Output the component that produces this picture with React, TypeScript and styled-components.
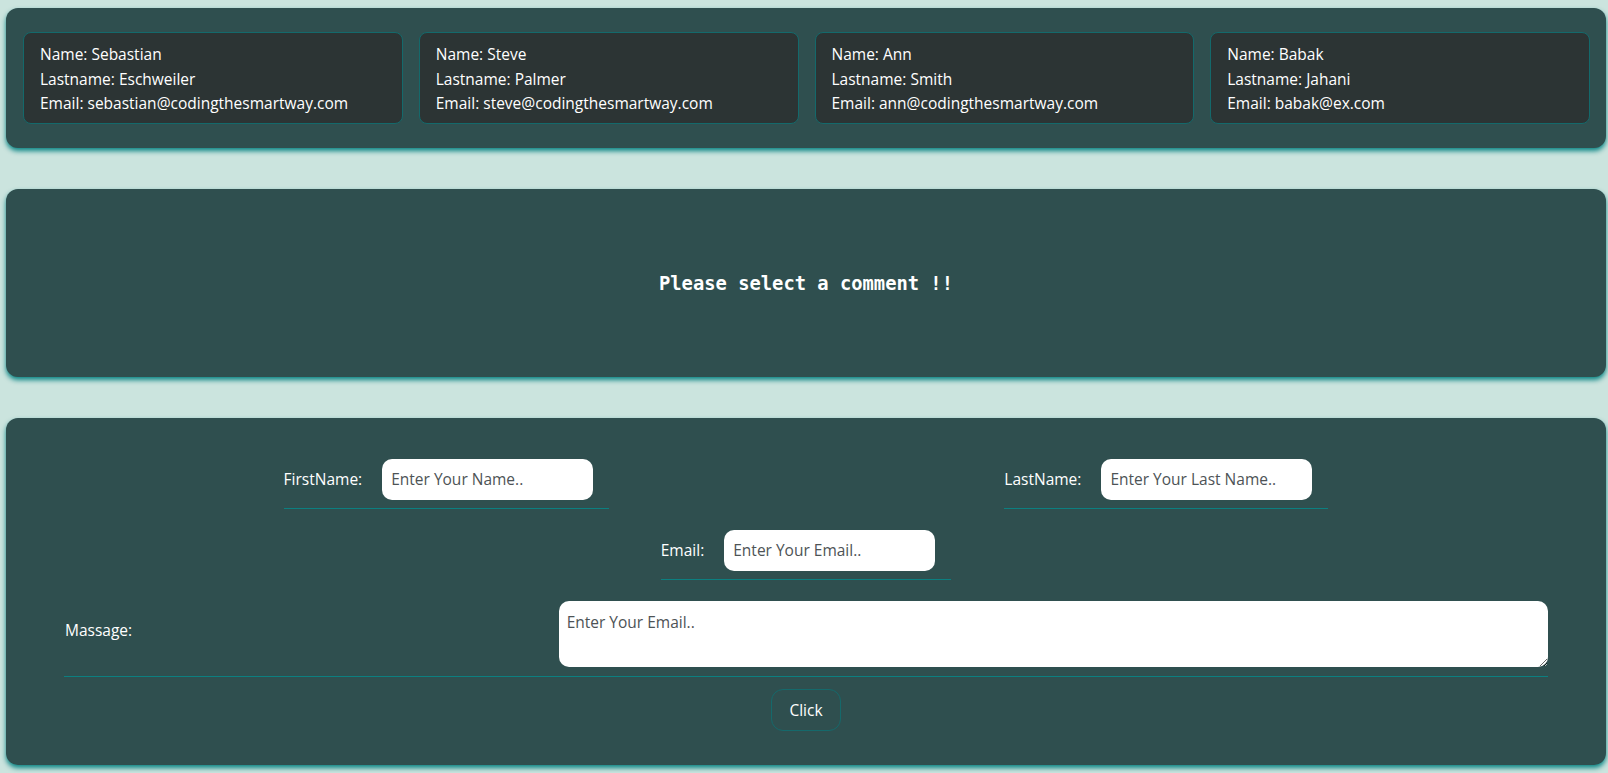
import React from "react";
import styled, { createGlobalStyle } from "styled-components";

const GlobalStyle = createGlobalStyle`
  html, body {
    margin: 0;
    padding: 0;
    background: #cbe4de;
  }
  body {
    font-family: "Open Sans", "Noto Sans", sans-serif;
    font-size: 15.5px;
    color: #ffffff;
  }
  * { box-sizing: border-box; }
`;

const Page = styled.div`
  display: flex;
  flex-direction: column;
  gap: 41px;
  padding: 8px 2px 8px 6px;
`;

const Panel = styled.section<{ $height?: number }>`
  width: 1600px;
  background: #2f4f4f;
  border-radius: 12px;
  box-shadow: 0 3px 5px rgba(0, 128, 128, 0.95);
  ${(p) => (p.$height ? `height: ${p.$height}px;` : "")}
`;

const CardPanel = styled(Panel)`
  display: grid;
  grid-template-columns: repeat(4, 1fr);
  gap: 16px;
  padding: 24px 16px 24px 17px;
`;

const Card = styled.div`
  background: #2c3434;
  border: 1px solid #14696b;
  border-radius: 8px;
  padding: 9px 16px 7px;
  line-height: 24.5px;
  cursor: pointer;
`;

const Line = styled.div`
  white-space: nowrap;
`;

const MessagePanel = styled(Panel)`
  display: flex;
  align-items: center;
  justify-content: center;
  padding-top: 2px;
`;

const Notice = styled.h3`
  margin: 0;
  font-family: "DejaVu Sans Mono", "Liberation Mono", monospace;
  font-weight: bold;
  font-size: 18.8px;
  color: #ffffff;
`;

const FormPanel = styled(Panel)`
  display: flex;
  flex-direction: column;
  align-items: center;
  padding: 41px 0 34px;
`;

const PairRow = styled.div`
  width: 1440px;
  display: flex;
  justify-content: space-around;
`;

const Field = styled.label`
  display: inline-flex;
  align-items: center;
  gap: 20px;
  padding: 0 16px 8px 0;
  border-bottom: 1px solid #0c7f80;
`;

const FieldText = styled.span`
  white-space: nowrap;
`;

const Input = styled.input`
  width: 211px;
  height: 41px;
  border: none;
  outline: none;
  border-radius: 10px;
  background: #ffffff;
  padding: 0 9px;
  font-family: "Open Sans", "Noto Sans", sans-serif;
  font-size: 15.5px;
  color: #222;
  &::placeholder {
    color: #4d5356;
  }
`;

const EmailRow = styled.div`
  margin-top: 21px;
  display: flex;
  justify-content: center;
`;

const MassageRow = styled.label`
  margin-top: 21px;
  width: 1484px;
  display: grid;
  grid-template-columns: 1fr 2fr;
  align-items: center;
  padding-bottom: 9px;
  border-bottom: 1px solid #0c7f80;
`;

const MassageText = styled.span`
  padding-left: 1px;
  margin-top: -8px;
`;

const TextArea = styled.textarea`
  display: block;
  width: 100%;
  height: 66px;
  border: none;
  outline: none;
  border-radius: 10px;
  background: #ffffff;
  padding: 9px 8px;
  font-family: "Open Sans", "Noto Sans", sans-serif;
  font-size: 15.5px;
  line-height: 24px;
  resize: vertical;
  &::placeholder {
    color: #4d5356;
  }
`;

const SubmitButton = styled.button`
  margin-top: 12px;
  width: 70px;
  height: 42px;
  background: transparent;
  border: 1px solid #15696b;
  border-radius: 12px;
  color: #ffffff;
  font-family: "Open Sans", "Noto Sans", sans-serif;
  font-size: 15.5px;
  cursor: pointer;
`;

const people = [
  { name: "Sebastian", last: "Eschweiler", email: "sebastian@codingthesmartway.com" },
  { name: "Steve", last: "Palmer", email: "steve@codingthesmartway.com" },
  { name: "Ann", last: "Smith", email: "ann@codingthesmartway.com" },
  { name: "Babak", last: "Jahani", email: "babak@ex.com" },
];

export default function App() {
  return (
    <>
      <GlobalStyle />
      <Page>
        <CardPanel>
          {people.map((p) => (
            <Card key={p.email}>
              <Line>Name: {p.name}</Line>
              <Line>Lastname: {p.last}</Line>
              <Line>Email: {p.email}</Line>
            </Card>
          ))}
        </CardPanel>
        <MessagePanel $height={188}>
          <Notice>Please select a comment !!</Notice>
        </MessagePanel>
        <FormPanel>
          <PairRow>
            <Field>
              <FieldText>FirstName:</FieldText>
              <Input placeholder="Enter Your Name.." />
            </Field>
            <Field>
              <FieldText>LastName:</FieldText>
              <Input placeholder="Enter Your Last Name.." />
            </Field>
          </PairRow>
          <EmailRow>
            <Field>
              <FieldText>Email:</FieldText>
              <Input placeholder="Enter Your Email.." />
            </Field>
          </EmailRow>
          <MassageRow>
            <MassageText>Massage:</MassageText>
            <TextArea placeholder="Enter Your Email.." />
          </MassageRow>
          <SubmitButton>Click</SubmitButton>
        </FormPanel>
      </Page>
    </>
  );
}
